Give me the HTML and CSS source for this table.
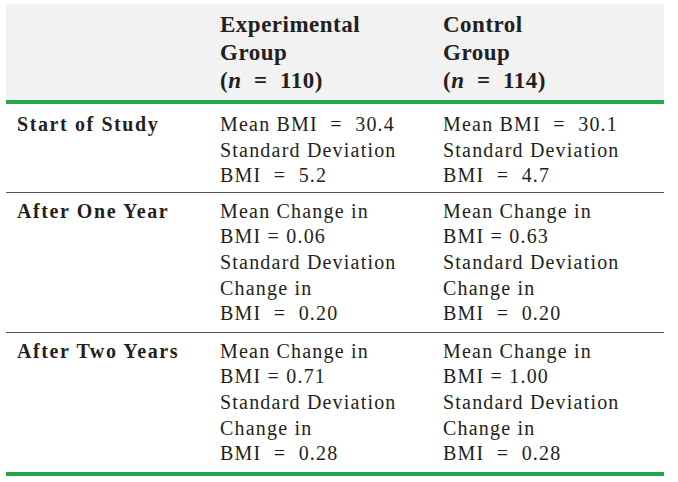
FILE: index.html
```html
<!DOCTYPE html>
<html>
<head>
<meta charset="utf-8">
<link rel="stylesheet" href="styles.css">
</head>
<body>
<div class="table">
  <div class="head">
    <div class="cell"></div>
    <div class="cell">Experimental<br>Group<br>(<i>n</i> &nbsp;= &nbsp;110)</div>
    <div class="cell">Control<br>Group<br>(<i>n</i> &nbsp;= &nbsp;114)</div>
  </div>
  <div class="row first">
    <div class="cell label">Start of Study</div>
    <div class="cell">Mean BMI &nbsp;= &nbsp;30.4<br>Standard Deviation<br>BMI &nbsp;= &nbsp;5.2</div>
    <div class="cell">Mean BMI &nbsp;= &nbsp;30.1<br>Standard Deviation<br>BMI &nbsp;= &nbsp;4.7</div>
  </div>
  <div class="row">
    <div class="cell label">After One Year</div>
    <div class="cell">Mean Change in<br>BMI = 0.06<br>Standard Deviation<br>Change in<br>BMI &nbsp;= &nbsp;0.20</div>
    <div class="cell">Mean Change in<br>BMI = 0.63<br>Standard Deviation<br>Change in<br>BMI &nbsp;= &nbsp;0.20</div>
  </div>
  <div class="row last">
    <div class="cell label">After Two Years</div>
    <div class="cell">Mean Change in<br>BMI = 0.71<br>Standard Deviation<br>Change in<br>BMI &nbsp;= &nbsp;0.28</div>
    <div class="cell">Mean Change in<br>BMI = 1.00<br>Standard Deviation<br>Change in<br>BMI &nbsp;= &nbsp;0.28</div>
  </div>
</div>
</body>
</html>
```
FILE: styles.css
```css
html, body {
  margin: 0;
  padding: 0;
  background: #ffffff;
}
body {
  padding: 4px 14px 0 6px;
  font-family: "Liberation Serif", "Times New Roman", serif;
  color: #231f20;
}
.table {
  width: 658px;
}
.head, .row {
  display: grid;
  grid-template-columns: 203px 223px 1fr;
}
.cell {
  padding-left: 11px;
}
.head {
  background: #f2f2f2;
  border-bottom: 4px solid #22a74b;
  padding: 7px 0 5px;
  font-weight: bold;
  font-size: 23px;
  line-height: 28px;
  letter-spacing: 0.5px;
}
.head i {
  font-style: italic;
}
.row {
  font-size: 20px;
  line-height: 25.6px;
  letter-spacing: 1.2px;
  padding: 6px 0 5px;
  border-bottom: 1px solid #555555;
}
.row.first {
  padding: 8px 0 3px;
}
.row.last {
  border-bottom: 4px solid #22a74b;
}
.label {
  font-weight: bold;
  letter-spacing: 1.6px;
}
```
